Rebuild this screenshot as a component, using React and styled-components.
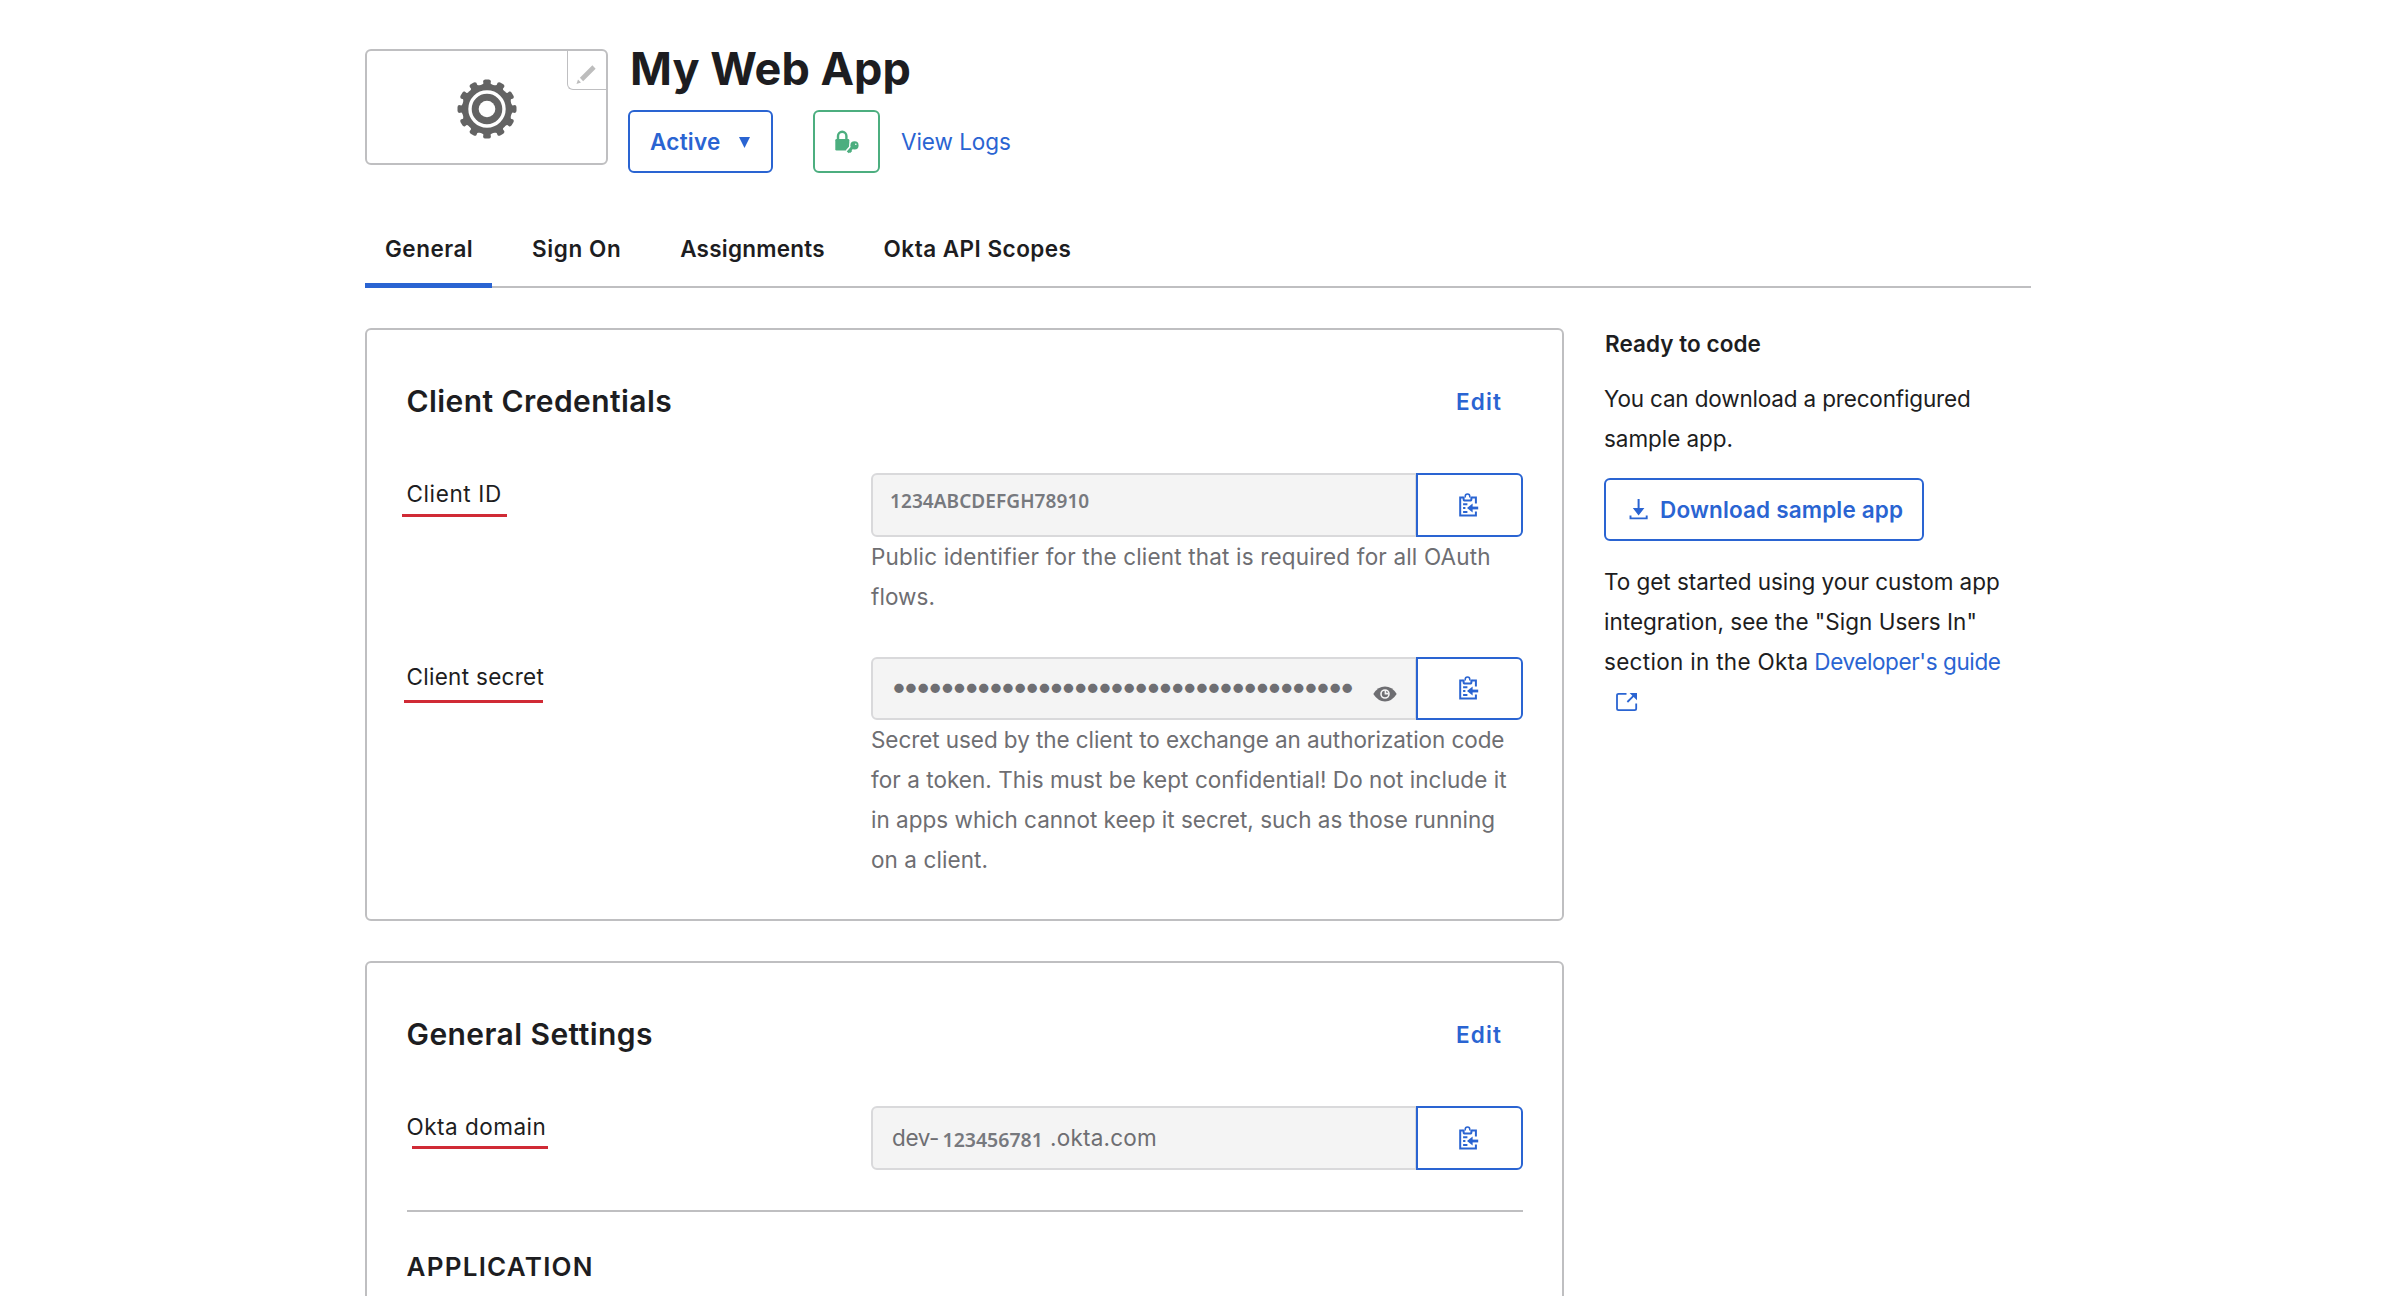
import React from "react";
import styled, { createGlobalStyle, css } from "styled-components";

const color = {
  ink: "#1d1d21",
  muted: "#6e6e72",
  blue: "#2a64d2",
  line: "#bfbfc1",
  inputLine: "#d9d9db",
  inputBg: "#f4f4f4",
  green: "#4cae7f",
  red: "#d02a35",
};

const GlobalStyle = createGlobalStyle`
  * { box-sizing: border-box; }
  html, body { margin: 0; background: #fff; }
  body { height: 1296px; overflow: hidden; }
  h1, h2, h3, p { margin: 0; }
  a { text-decoration: none; }
`;

const Page = styled.main`
  width: 1666px;
  margin-left: 365px;
  padding-top: 44px;
  color: ${color.ink};
  font: 400 22.5px/40px Inter, "Liberation Sans", sans-serif;
`;

const Line = styled.span`
  display: block;
  white-space: nowrap;
  letter-spacing: ${(p) => p.$track || 0}px;
`;

const Word = styled.span`
  letter-spacing: ${(p) => p.$track || 0}px;
  white-space: nowrap;
`;

/* ---------- header ---------- */

const Header = styled.header`
  display: flex;
  gap: 20px;
`;

const LogoBox = styled.div`
  position: relative;
  display: flex;
  align-items: center;
  justify-content: center;
  width: 243px;
  height: 116px;
  padding-top: 4px;
  margin-top: 5px;
  border: 2px solid ${color.line};
  border-radius: 6px;
`;

const EditLogo = styled.button`
  position: absolute;
  top: 0;
  right: 0;
  width: 39px;
  height: 39px;
  padding: 0;
  background: none;
  border: solid ${color.line};
  border-width: 0 0 1px 1px;
  border-radius: 0 0 0 6px;
  svg { display: block; }
`;

const Title = styled.h1`
  margin-left: 2px;
  font-size: 45px;
  line-height: 50px;
  font-weight: 650;
  letter-spacing: 0;
`;

const Actions = styled.div`
  display: flex;
  align-items: center;
  margin-top: 16px;
`;

const outline = css`
  display: flex;
  align-items: center;
  height: 63px;
  background: #fff;
  border: 2px solid ${color.blue};
  border-radius: 6px;
  color: ${color.blue};
  font: inherit;
  font-weight: 600;
`;

const StatusButton = styled.button`
  ${outline}
  justify-content: space-between;
  width: 145px;
  padding: 1px 21px 0 20px;
`;

const LockButton = styled.button`
  ${outline}
  justify-content: center;
  width: 67px;
  padding: 0;
  margin-left: 40px;
  border-color: ${color.green};
`;

const LogsLink = styled.a`
  margin-left: 21px;
  padding-top: 1px;
  color: ${color.blue};
  letter-spacing: -0.05px;
`;

/* ---------- tabs ---------- */

const Tabs = styled.nav`
  display: flex;
  gap: 20.8px;
  height: 60px;
  margin-top: 55px;
  border-bottom: 2px solid ${color.line};
`;

const Tab = styled.a`
  height: 60px;
  padding: 1px 19px 0;
  font-weight: 600;
  letter-spacing: ${(p) => p.$track}px;
  white-space: nowrap;
  border-bottom: 5px solid ${(p) => (p.$active ? color.blue : "transparent")};
  &:first-child { padding-left: 20px; }
`;

/* ---------- content ---------- */

const Content = styled.div`
  display: flex;
  gap: 40px;
  margin-top: 40px;
`;

const Cards = styled.div`
  display: flex;
  flex-direction: column;
  gap: 40px;
  width: 1199px;
`;

const Card = styled.section`
  padding: 51px 39.5px 39px 39.5px;
  border: 2px solid ${color.line};
  border-radius: 6px;
`;

const CardHead = styled.div`
  display: flex;
  justify-content: space-between;
  margin-bottom: 52px;
  padding-right: 20.5px;
`;

const CardTitle = styled.h2`
  font-size: 30px;
  line-height: 40px;
  font-weight: 600;
  letter-spacing: 0.43px;
`;

const EditLink = styled.a`
  position: relative;
  top: 1px;
  color: ${color.blue};
  font-weight: 600;
  letter-spacing: 1.1px;
`;

const Fields = styled.div`
  display: flex;
  flex-direction: column;
  gap: 40px;
`;

const Row = styled.div`
  display: grid;
  grid-template-columns: 464.5px 651.5px;
  align-items: start;
`;

const Label = styled.div`
  position: relative;
  padding-top: 0.5px;
  letter-spacing: ${(p) => p.$track}px;
`;

const Marker = styled.i`
  position: absolute;
  left: ${(p) => p.$left}px;
  top: ${(p) => p.$top}px;
  width: ${(p) => p.$width}px;
  height: 3px;
  background: ${color.red};
`;

const InputGroup = styled.div`
  display: flex;
  height: 63.5px;
`;

const ReadOnly = styled.div`
  display: flex;
  flex: none;
  align-items: center;
  width: 545.4px;
  padding-left: ${(p) => p.$pad}px;
  background: ${color.inputBg};
  border: 2px solid ${color.inputLine};
  border-right-width: 1px;
  border-radius: 6px 0 0 6px;
  color: ${color.muted};
`;

const CopyButton = styled.button`
  ${outline}
  flex: none;
  width: 106.6px;
  height: 63.5px;
  padding: 0 0 0 41px;
  border-radius: 0 6px 6px 0;
`;

const Code = styled.span`
  font: 600 ${(p) => p.$size}px/24px "Noto Sans", "Open Sans", sans-serif;
  color: #77797e;
  letter-spacing: ${(p) => p.$track}px;
  margin-top: ${(p) => p.$shift}px;
  width: ${(p) => (p.$width ? p.$width + "px" : "auto")};
`;

const Prefix = styled.span`
  width: 50.5px;
  letter-spacing: -0.4px;
`;

const Dots = styled.span`
  flex: none;
  width: 463px;
  margin: -4px 0 0 -2px;
  font-size: 30px;
  line-height: 30px;
  letter-spacing: -4.76px;
  white-space: nowrap;
`;

const Eye = styled.svg`
  flex: none;
  margin: 11px 0 0 19px;
`;

const Help = styled.p`
  color: ${color.muted};
`;

const Divider = styled.hr`
  margin: 40px 0 35px;
  border: 0;
  border-top: 2px solid ${color.line};
`;

const SubTitle = styled.h3`
  font-size: 26px;
  line-height: 40px;
  font-weight: 600;
  letter-spacing: 1.25px;
`;

/* ---------- sidebar ---------- */

const Sidebar = styled.aside`
  width: 427px;
  padding-top: 1px;
`;

const SideTitle = styled.h3`
  margin: 0 0 20px 1px;
  font-size: 22.5px;
  line-height: 30px;
  font-weight: 600;
  letter-spacing: 0.05px;
`;

const DownloadButton = styled.button`
  ${outline}
  gap: 11.5px;
  width: 320px;
  padding: 0 0 0 22.5px;
  margin: 19px 0 21px;
  letter-spacing: 0.16px;
  white-space: nowrap;
`;

const GuideLink = styled.a`
  color: ${color.blue};
`;

const GuideLine = styled.span`
  display: flex;
  justify-content: space-between;
  width: 396.5px;
`;

const ExternalMark = styled.span`
  display: flex;
  align-items: center;
  height: 40px;
  padding-left: 12px;
`;

/* ---------- drawings ---------- */

const Gear = () => (
  <svg width="60" height="60" viewBox="-30 -30 60 60">
    <g fill="#636363">
      {Array.from({ length: 12 }, (_, i) => (
        <path key={i} transform={`rotate(${i * 30})`} d="M-6.5 -22.5 L-3.6 -25.6 L-3.9 -28 Q-3.4 -29.5 -1.8 -29.5 H1.8 Q3.4 -29.5 3.9 -28 L3.6 -25.6 L6.5 -22.5 Z" />
      ))}
      <circle r="25" />
    </g>
    <circle r="17" fill="none" stroke="#fff" strokeWidth="3.4" />
    <circle r="8.3" fill="#fff" />
  </svg>
);

const Pencil = () => (
  <svg width="38" height="38" viewBox="0 0 38 38">
    <path d="M13.5 28.5 L26 16" stroke="#bdbdbd" strokeWidth="4.6" />
    <path d="M8.5 33 L10 28.6 L13 31.4 Z" fill="#bdbdbd" />
  </svg>
);

const LockKey = () => (
  <svg width="24" height="24" viewBox="0 0 24 24">
    <path d="M3 10 V6 a4.2 4.2 0 0 1 8.4 0 V10" fill="none" stroke={color.green} strokeWidth="2.4" />
    <rect x="0.3" y="9" width="14" height="11.5" rx="1.2" fill={color.green} />
    <path d="M19 15.6 L13 22.3" stroke="#fff" strokeWidth="6" />
    <circle cx="19.3" cy="15.6" r="5.2" fill="#fff" />
    <path d="M18.6 16 L12.8 22.4 M14.6 20.4 L16.2 22" stroke={color.green} strokeWidth="2.9" />
    <circle cx="19.5" cy="15.4" r="4.1" fill={color.green} />
    <circle cx="20.8" cy="14.2" r="0.8" fill="#fff" />
  </svg>
);

const Clipboard = () => (
  <svg width="20" height="24" viewBox="0 0 20 24" fill="none" stroke={color.blue} strokeWidth="2">
    <path d="M4.6 4.6 H1.2 V22.6 H16.9 V18.4 M12.4 4.6 H16.9 V10.4" />
    <path d="M4.6 3.8 V6 Q4.6 7.6 6 7.6 H11 Q12.4 7.6 12.4 6 V3.8" />
    <path d="M6.2 4.4 V3.6 a2.3 2.5 0 0 1 4.6 0 V4.4" strokeWidth="1.5" />
    <path d="M4.1 11.2 H8.4 M4.1 15 H6.4 M4.1 18.9 H8.4" />
    <path d="M12 15 H19.2" strokeWidth="2.8" />
    <path d="M8 15 L13.6 10.6 V19.4 Z" fill={color.blue} stroke="none" />
  </svg>
);

const Download = () => (
  <svg width="20" height="21" viewBox="0 0 20 21">
    <path d="M8.6 0 H10.6 V9 H15.4 L9.6 16.4 L3.8 9 H8.6 Z" fill={color.blue} />
    <path d="M1.5 16.4 V19.4 H17.7 V16.4" fill="none" stroke={color.blue} strokeWidth="1.9" />
  </svg>
);

const External = () => (
  <svg width="22" height="20" viewBox="0 0 22 20" fill="none" stroke={color.blue} strokeWidth="1.8">
    <path d="M10.5 1.8 H2.6 Q1 1.8 1 3.4 V16.6 Q1 18.2 2.6 18.2 H18.6 Q20.2 18.2 20.2 16.6 V11.5" />
    <path d="M11.4 10 L18 3.4" />
    <path d="M13.6 1 H21 V8.2 Z" fill={color.blue} stroke="none" />
  </svg>
);

const Field = ({ label, track, marker, pad, value, help }) => (
  <Row>
    <Label $track={track}>
      {label}
      <Marker $left={marker[0]} $top={marker[1]} $width={marker[2]} />
    </Label>
    <div>
      <InputGroup>
        <ReadOnly $pad={pad}>{value}</ReadOnly>
        <CopyButton aria-label="Copy">
          <Clipboard />
        </CopyButton>
      </InputGroup>
      {help && (
        <Help>
          {help.map(([text, t]) => (
            <Line key={text} $track={t}>{text}</Line>
          ))}
        </Help>
      )}
    </div>
  </Row>
);

export default function App() {
  return (
    <>
      <GlobalStyle />
      <Page>
        <Header>
          <LogoBox>
            <Gear />
            <EditLogo aria-label="Edit logo">
              <Pencil />
            </EditLogo>
          </LogoBox>
          <div>
            <Title>My Web App</Title>
            <Actions>
              <StatusButton>
                <Word $track={0.25}>Active</Word>
                <svg width="11" height="11" viewBox="0 0 11 11">
                  <path d="M0 0 H11 L5.5 11 Z" fill={color.blue} />
                </svg>
              </StatusButton>
              <LockButton aria-label="Permissions">
                <LockKey />
              </LockButton>
              <LogsLink>View Logs</LogsLink>
            </Actions>
          </div>
        </Header>

        <Tabs>
          <Tab $active $track={0.5}>General</Tab>
          <Tab $track={0.6}>Sign On</Tab>
          <Tab $track={0.23}>Assignments</Tab>
          <Tab $track={0.48}>Okta API Scopes</Tab>
        </Tabs>

        <Content>
          <Cards>
            <Card>
              <CardHead>
                <CardTitle>Client Credentials</CardTitle>
                <EditLink>Edit</EditLink>
              </CardHead>
              <Fields>
                <Field
                  label="Client ID"
                  track={0.62}
                  marker={[-4.5, 41, 105]}
                  pad={17}
                  value={<Code $size={19} $track={0.07} $shift={-7}>1234ABCDEFGH78910</Code>}
                  help={[
                    ["Public identifier for the client that is required for all OAuth", 0.17],
                    ["flows.", 0.07],
                  ]}
                />
                <Field
                  label="Client secret"
                  track={0.29}
                  marker={[-2.5, 43.5, 139]}
                  pad={19.5}
                  value={
                    <>
                      <Dots>{"•".repeat(38)}</Dots>
                      <Eye width="24" height="16" viewBox="0 0 24 16">
                        <path d="M0.3 8 Q5 0.6 12 0.6 Q19 0.6 23.7 8 Q19 15.4 12 15.4 Q5 15.4 0.3 8 Z" fill={color.muted} />
                        <circle cx="12" cy="8" r="4" fill="none" stroke="#f4f4f4" strokeWidth="1.6" />
                        <path d="M12.4 4 V7.6 H15.6" fill="none" stroke="#f4f4f4" strokeWidth="1.6" />
                      </Eye>
                    </>
                  }
                  help={[
                    ["Secret used by the client to exchange an authorization code", -0.07],
                    ["for a token. This must be kept confidential! Do not include it", 0.05],
                    ["in apps which cannot keep it secret, such as those running", 0],
                    ["on a client.", 0.08],
                  ]}
                />
              </Fields>
            </Card>

            <Card>
              <CardHead>
                <CardTitle>General Settings</CardTitle>
                <EditLink>Edit</EditLink>
              </CardHead>
              <Field
                label="Okta domain"
                track={0.5}
                marker={[5.5, 40, 135.5]}
                pad={19}
                value={
                  <>
                    <Prefix>dev-</Prefix>
                    <Code $size={19.5} $track={0} $shift={4} $width={107.5}>123456781</Code>
                    <Word $track={0.22}>.okta.com</Word>
                  </>
                }
              />
              <Divider />
              <SubTitle>APPLICATION</SubTitle>
            </Card>
          </Cards>

          <Sidebar>
            <SideTitle>Ready to code</SideTitle>
            <p>
              <Line $track={-0.17}>You can download a preconfigured</Line>
              <Line $track={-0.06}>sample app.</Line>
            </p>
            <DownloadButton>
              <Download />
              Download sample app
            </DownloadButton>
            <p>
              <Line $track={-0.04}>To get started using your custom app</Line>
              <Line>integration, see the "Sign Users In"</Line>
              <GuideLine>
                <Word $track={0.3}>section in the Okta</Word>
                <GuideLink>
                  <Word $track={-0.4}>Developer's guide</Word>
                </GuideLink>
              </GuideLine>
              <ExternalMark>
                <External />
              </ExternalMark>
            </p>
          </Sidebar>
        </Content>
      </Page>
    </>
  );
}
